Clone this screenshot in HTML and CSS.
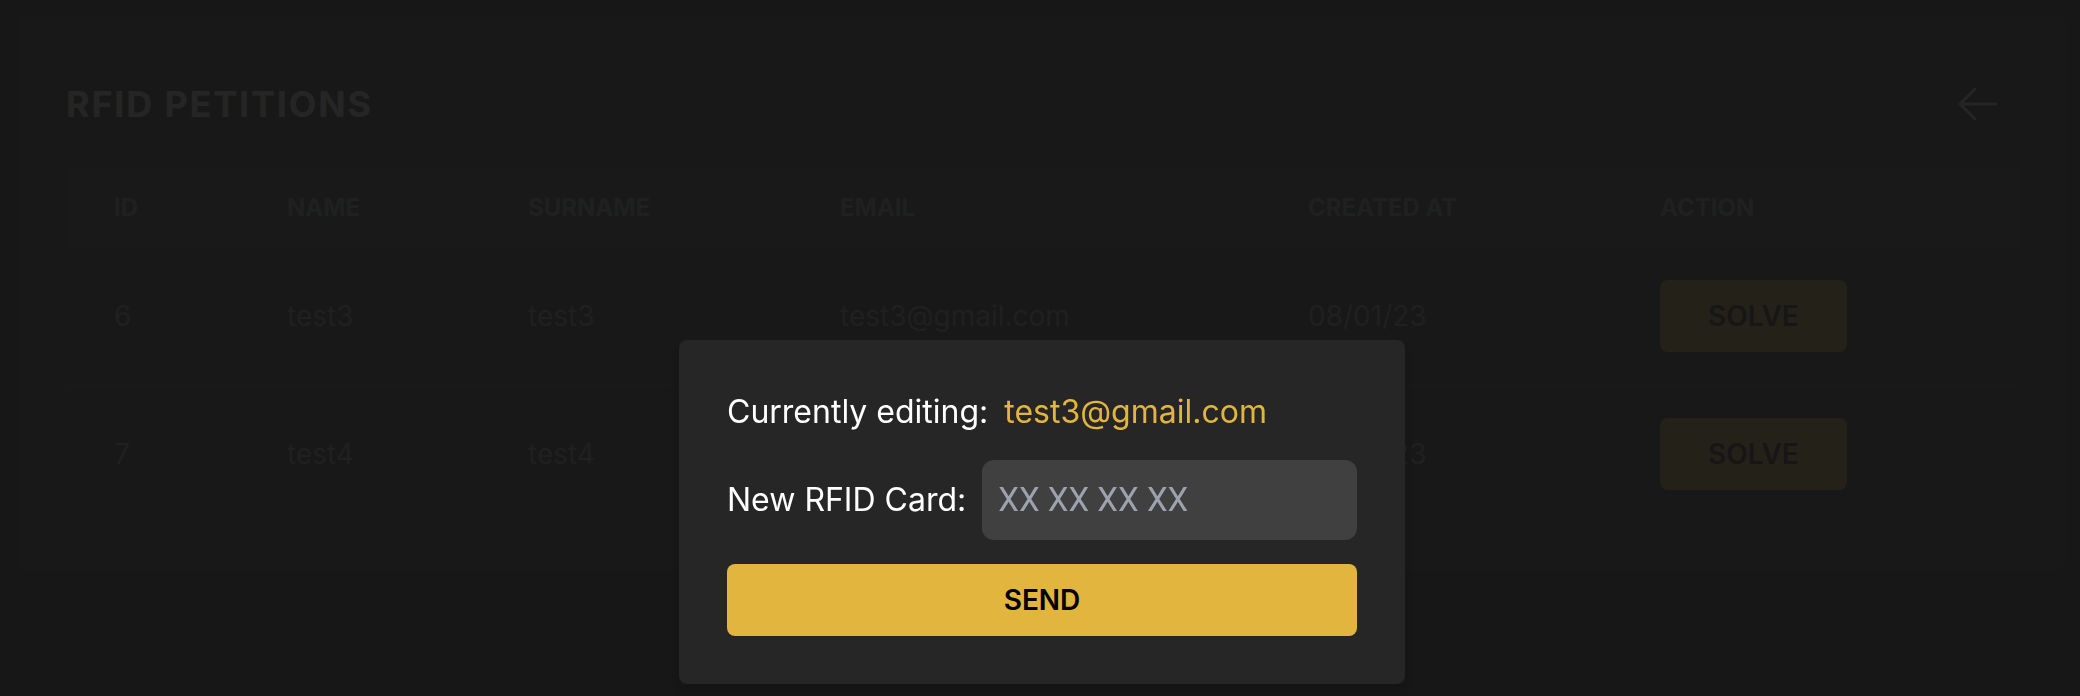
FILE: index.html
```html
<!DOCTYPE html>
<html lang="en">
<head>
<meta charset="utf-8">
<title>RFID Petitions</title>
<link rel="stylesheet" href="styles.css">
</head>
<body>
<main class="page">
  <section class="card">
    <header class="card-header">
      <h1 class="title">RFID PETITIONS</h1>
      <button class="back" type="button" aria-label="Back">
        <svg class="back-icon" viewBox="0 0 24 24" fill="none" stroke="currentColor" stroke-width="1.5" stroke-linecap="round" stroke-linejoin="round" aria-hidden="true"><path d="M10.5 19.5L3 12m0 0l7.5-7.5M3 12h18"/></svg>
      </button>
    </header>
    <table class="petitions">
      <colgroup><col class="col-id"><col class="col-name"><col class="col-surname"><col class="col-email"><col class="col-created"><col class="col-action"></colgroup>
      <thead>
        <tr><th scope="col">ID</th><th scope="col">NAME</th><th scope="col">SURNAME</th><th scope="col">EMAIL</th><th scope="col">CREATED AT</th><th scope="col">ACTION</th></tr>
      </thead>
      <tbody>
        <tr><td>6</td><td>test3</td><td>test3</td><td>test3@gmail.com</td><td>08/01/23</td><td><button class="btn" type="button">SOLVE</button></td></tr>
        <tr><td>7</td><td>test4</td><td>test4</td><td>test4@gmail.com</td><td>08/01/23</td><td><button class="btn" type="button">SOLVE</button></td></tr>
      </tbody>
    </table>
  </section>
</main>
<div class="overlay">
  <form class="modal" role="dialog" aria-label="Edit RFID card">
    <p class="editing">Currently editing: <span class="email">test3@gmail.com</span></p>
    <div class="field">
      <label for="rfid">New RFID Card:</label>
      <input class="input" id="rfid" type="text" placeholder="XX XX XX XX">
    </div>
    <button class="btn" type="button">SEND</button>
  </form>
</div>
</body>
</html>
```

FILE: styles.css
```css
* {
  box-sizing: border-box;
}

body {
  margin: 0;
  min-height: 100vh;
  background: #171717;
  color: #fff;
  font-family: Inter, "Liberation Sans", sans-serif;
  font-size: 32px;
  line-height: 48px;
}

button,
input {
  border: 0;
  font: inherit;
}

.page {
  padding: 16px 14px 16px 18px;
}

.card {
  padding: 48px;
  border-radius: 8px;
  background: #282828;
}

.card-header {
  display: flex;
  align-items: center;
  justify-content: space-between;
  margin-bottom: 24px;
}

.title {
  margin: 0;
  font-size: 36px;
  line-height: 40px;
  font-weight: 700;
  letter-spacing: 0.05em;
}

.back {
  display: flex;
  padding: 16px;
  background: none;
  color: #fff;
}

.back-icon {
  width: 48px;
  height: 48px;
}

.petitions {
  width: 100%;
  table-layout: fixed;
  border-collapse: collapse;
  color: #9ca3a3;
  font-size: 28px;
  line-height: 40px;
  text-align: left;
}

.col-id { width: 173px; }
.col-name { width: 241px; }
.col-surname { width: 312px; }
.col-email { width: 468px; }
.col-created { width: 352px; }

.petitions thead {
  background: #383838;
  color: #9ca6a6;
  font-size: 24px;
  line-height: 32px;
}

.petitions th {
  padding: 24px 48px;
  font-weight: 700;
}

.petitions td {
  padding: 32px 48px;
}

.petitions tbody tr {
  border-bottom: 2px solid #303030;
}

.petitions tbody tr:last-child {
  border-bottom: 0;
}

.btn {
  padding: 16px 48px;
  border-radius: 8px;
  background: #e2b53e;
  color: #000;
  font-size: 28px;
  line-height: 40px;
  font-weight: 600;
}

.overlay {
  position: fixed;
  inset: 0;
  display: flex;
  align-items: flex-end;
  justify-content: center;
  padding: 12px 0 12px 4px;
  background: rgba(23, 23, 23, 0.94);
}

.modal {
  display: flex;
  flex-direction: column;
  gap: 24px;
  width: 726px;
  padding: 48px;
  border-radius: 8px;
  background: #262626;
  box-shadow: 0 8px 12px -2px rgba(0, 0, 0, 0.1), 0 4px 8px -4px rgba(0, 0, 0, 0.1);
}

.editing {
  display: flex;
  gap: 16px;
  margin: 0;
}

.email {
  color: #e2b53e;
}

.field {
  display: flex;
  align-items: center;
  gap: 16px;
}

.input {
  flex: 1;
  min-width: 0;
  padding: 16px;
  border-radius: 12px;
  background: #404040;
  color: #fff;
  font-family: Roboto, "Liberation Sans", sans-serif;
  font-size: 33px;
}

.input::placeholder {
  color: #9ca3af;
  opacity: 1;
}
```
